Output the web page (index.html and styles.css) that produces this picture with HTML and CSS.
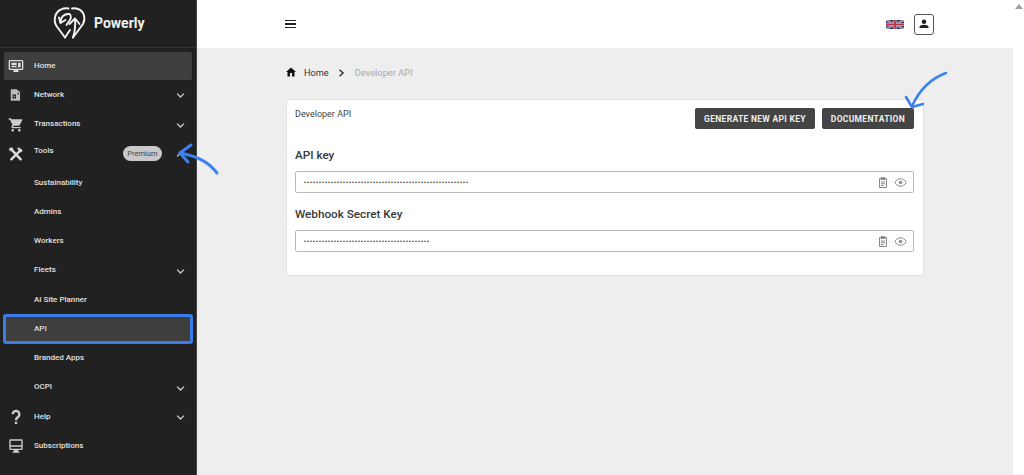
FILE: index.html
```html
<!DOCTYPE html>
<html lang="en">
<head>
<meta charset="utf-8">
<title>Developer API</title>
<link rel="stylesheet" href="styles.css">
</head>
<body>
<div class="app">
  <aside class="sidebar">
    <div class="brand">
      <svg class="logo" viewBox="0 0 44 38" fill="none" stroke="#f4f4f4" stroke-width="1.900" stroke-linecap="round" stroke-linejoin="round">
        <path d="M17 33.500 8.500 22C5 16 7 8 13 5.500 15.500 4.200 18 4 20.500 4.500"/>
        <path d="M25 33.500 35 20C38 14 36 7 30 5 28 4.200 26 4 24 4.500"/>
        <path d="M11 13.500 12.500 19 17.500 16"/>
        <path d="M12.500 18.500C12.500 13 16 9.500 21.500 10 24 12 23 15 20.500 18L18.500 21"/>
        <path d="M17 33.500 22 26"/>
        <path d="M21.500 20 27 14.500 31.500 20"/>
        <path d="M27 15C27.500 22 27 28 25 33.500"/>
      </svg>
      <span class="brand-name">Powerly</span>
    </div>
    <nav class="nav">
      <a class="item active">
        <svg class="ico" viewBox="0 0 24 24" fill="#ddd"><path d="M21 3H3a2 2 0 0 0-2 2v11a2 2 0 0 0 2 2h6l-1 2v1h8v-1l-1-2h6a2 2 0 0 0 2-2V5a2 2 0 0 0-2-2zm0 13H3V5h18z"/><path d="M5 7h8v4H5zm10 0h4v7h-4zM5 12h8v2H5z"/></svg>
        <span class="label">Home</span>
      </a>
      <a class="item">
        <svg class="ico ico-sm" viewBox="0 0 24 24" fill="#bbb"><path d="M3 2h10l6 5v15H3zm3 9v7h6v-7zm9-3v3h2V8z"/><path d="M9 12l-2 3h2v2l2-3H9z"/></svg>
        <span class="label">Network</span>
        <svg class="chev" viewBox="0 0 12 8"><path d="M1.500 1.500 6 6l4.500-4.500"/></svg>
      </a>
      <a class="item">
        <svg class="ico" viewBox="0 0 24 24" fill="#ccc"><path d="M7 18a2 2 0 1 0 0 4 2 2 0 0 0 0-4zm10 0a2 2 0 1 0 0 4 2 2 0 0 0 0-4zM1 2v2h2l3.600 7.600L5.200 14c-.7 1.400.3 3 1.800 3h12v-2H7.400l1.100-2h7.500c.7 0 1.400-.4 1.700-1L21.300 5c.4-.7-.1-1.500-.9-1.500H5.200L4.300 2z"/></svg>
        <span class="label">Transactions</span>
        <svg class="chev" viewBox="0 0 12 8"><path d="M1.500 1.500 6 6l4.500-4.500"/></svg>
      </a>
      <a class="item item-tools">
        <svg class="ico" viewBox="0 0 24 24" fill="none" stroke="#ddd" stroke-linecap="round"><path d="M5 20 19 6" stroke-width="3.600"/><path d="M5 5 19 20" stroke-width="3.600"/><path d="M14.500 4.500 19.500 9.500 21.500 7.500 16.500 2.500z" fill="#ddd" stroke-width="1"/><path d="M3 3 7 3 7 7 3 7z" fill="#ddd" stroke-width="1"/></svg>
        <span class="label label-up">Tools</span>
        <span class="badge">Premium</span>
        <svg class="chev" viewBox="0 0 12 8"><path d="M1.500 6.500 6 2l4.500 4.500"/></svg>
      </a>
      <a class="item"><span class="ico-gap"></span><span class="label">Sustainability</span></a>
      <a class="item"><span class="ico-gap"></span><span class="label">Admins</span></a>
      <a class="item"><span class="ico-gap"></span><span class="label">Workers</span></a>
      <a class="item"><span class="ico-gap"></span><span class="label">Fleets</span>
        <svg class="chev" viewBox="0 0 12 8"><path d="M1.500 1.500 6 6l4.500-4.500"/></svg></a>
      <a class="item"><span class="ico-gap"></span><span class="label">AI Site Planner</span></a>
      <a class="item current"><span class="ico-gap"></span><span class="label">API</span></a>
      <a class="item"><span class="ico-gap"></span><span class="label">Branded Apps</span></a>
      <a class="item"><span class="ico-gap"></span><span class="label">OCPI</span>
        <svg class="chev" viewBox="0 0 12 8"><path d="M1.500 1.500 6 6l4.500-4.500"/></svg></a>
      <a class="item">
        <svg class="ico" viewBox="0 0 24 24" fill="none" stroke="#ccc" stroke-width="3.600"><path d="M7 8a5 5 0 1 1 8.500 3.500C13.500 13 12 14 12 17"/><path d="M12 19v3.500"/></svg>
        <span class="label">Help</span>
        <svg class="chev" viewBox="0 0 12 8"><path d="M1.500 1.500 6 6l4.500-4.500"/></svg>
      </a>
      <a class="item">
        <svg class="ico" viewBox="0 0 24 24" fill="#ccc"><path d="M4 2h16a2 2 0 0 1 2 2v12a2 2 0 0 1-2 2h-5v2h2v2H7v-2h2v-2H4a2 2 0 0 1-2-2V4a2 2 0 0 1 2-2zm0 2v7h16V4zm0 9v3h16v-3z"/></svg>
        <span class="label">Subscriptions</span>
      </a>
    </nav>
  </aside>

  <div class="main">
    <header class="topbar">
      <div class="burger"><i></i><i></i><i></i></div>
      <div class="top-right">
        <svg class="flag" viewBox="0 0 60 30"><rect width="60" height="30" fill="#2a3a6e"/><path d="M0 0l60 30M60 0L0 30" stroke="#ddd" stroke-width="6"/><path d="M0 0l60 30M60 0L0 30" stroke="#b8324a" stroke-width="2.500"/><path d="M30 0v30M0 15h60" stroke="#ddd" stroke-width="10"/><path d="M30 0v30M0 15h60" stroke="#b8324a" stroke-width="6"/></svg>
        <button class="user-btn">
          <svg viewBox="0 0 24 24" fill="#222"><circle cx="12" cy="7.500" r="4.500"/><path d="M3 20v-1.500C3 15 8 13.500 12 13.500s9 1.500 9 5V20z"/></svg>
        </button>
      </div>
    </header>
    <main class="content">
      <div class="crumbs">
        <svg class="home-ico" viewBox="0 0 24 24" fill="#111"><path d="M10 21v-7h4v7h5v-9h3L12 3 2 12h3v9z"/></svg>
        <span class="crumb">Home</span>
        <svg class="crumb-sep" viewBox="0 0 8 10"><path d="M1.500 1 6 5 1.500 9"/></svg>
        <span class="crumb-now">Developer API</span>
      </div>
      <section class="card">
        <div class="card-head">
          <span class="card-title">Developer API</span>
          <div class="actions">
            <button class="btn">GENERATE NEW API KEY</button>
            <button class="btn">DOCUMENTATION</button>
          </div>
        </div>
        <h2 class="field-title first">API key</h2>
        <div class="field">
          <span class="dots">•••••••••••••••••••••••••••••••••••••••••••••••••••••••</span>
          <svg class="f-ico" viewBox="0 0 24 24" fill="none" stroke="#888" stroke-width="2"><path d="M8 4H5v18h14V4h-3"/><path d="M8 2.500h8V6H8z" fill="#888"/><path d="M8 11h8M8 14.500h8M8 18h5"/></svg>
          <svg class="f-ico eye" viewBox="0 0 24 24" fill="none" stroke="#888" stroke-width="1.800"><path d="M1.500 12C4 7.500 8 5 12 5s8 2.500 10.500 7C20 16.500 16 19 12 19S4 16.500 1.500 12z"/><circle cx="12" cy="12" r="2.500" fill="#888"/></svg>
        </div>
        <h2 class="field-title">Webhook Secret Key</h2>
        <div class="field">
          <span class="dots">••••••••••••••••••••••••••••••••••••••••••</span>
          <svg class="f-ico" viewBox="0 0 24 24" fill="none" stroke="#888" stroke-width="2"><path d="M8 4H5v18h14V4h-3"/><path d="M8 2.500h8V6H8z" fill="#888"/><path d="M8 11h8M8 14.500h8M8 18h5"/></svg>
          <svg class="f-ico eye" viewBox="0 0 24 24" fill="none" stroke="#888" stroke-width="1.800"><path d="M1.500 12C4 7.500 8 5 12 5s8 2.500 10.500 7C20 16.500 16 19 12 19S4 16.500 1.500 12z"/><circle cx="12" cy="12" r="2.500" fill="#888"/></svg>
        </div>
      </section>
    </main>
  </div>

  <div class="scrollbar">
    <svg class="scroll-up" viewBox="0 0 8 5"><path d="M4 0 8 5H0z"/></svg>
  </div>

  <svg class="arrow arrow-tools" viewBox="0 0 55 40" fill="none" stroke="#3b82f0" stroke-width="3" stroke-linecap="round" stroke-linejoin="round"><path d="M47 33C40 24 31 17 10 13"/><path d="M21 5 10 13l8 9"/></svg>
  <svg class="arrow arrow-docs" viewBox="0 0 50 40" fill="none" stroke="#3b82f0" stroke-width="2.600" stroke-linecap="round" stroke-linejoin="round"><path d="M44 2C30 7 18 18 10 35"/><path d="M4 26l6 10 11-3"/></svg>
</div>
</body>
</html>
```
FILE: styles.css
```css
* { box-sizing: border-box; }
html, body { margin: 0; height: 100%; overflow: hidden; }
body { font-family: Roboto, "Liberation Sans", sans-serif; background: #fff; }
.app { position: relative; display: flex; width: 1024px; height: 475px; overflow: hidden; }

.sidebar { width: 197px; flex: none; background: #212121; border-right: 1px solid #444; display: flex; flex-direction: column; }
.brand { height: 48px; flex: none; display: flex; align-items: center; gap: 2px; padding: 0 0 1px 48px; border-bottom: 1px solid #333; }
.logo { width: 44px; height: 38px; flex: none; }
.brand-name { color: #f2f2f2; font-size: 14px; font-weight: 700; }
.nav { padding: 4px 4px 0; display: flex; flex-direction: column; gap: 1.250px; }
.item { position: relative; display: flex; align-items: center; height: 28px; padding-left: 4px; padding-right: 7px; border-radius: 2px; color: #e0e0e0; font-size: 8px; font-weight: 500; }
.item.active { background: #3e3e3e; }
.item.current { background: #3e3e3e; outline: 3px solid #3b7de8; outline-offset: -2px; }
.ico { width: 16px; height: 16px; flex: none; }
.ico-sm { width: 14px; height: 14px; margin: 0 1px; }
.ico-gap { width: 16px; flex: none; }
.label { margin-left: 10px; padding-bottom: 2px; white-space: nowrap; }
.label-up { position: relative; top: -2px; }
.chev { position: absolute; right: 7px; top: 11px; width: 9px; height: 7px; fill: none; stroke: #ccc; stroke-width: 1.800; }
.badge { position: absolute; left: 119px; top: 6px; width: 39px; height: 15px; border-radius: 8px; background: #c9c9c9; color: #444; font-size: 7.500px; font-weight: 400; line-height: 15px; text-align: center; }

.main { flex: 1; min-width: 0; display: flex; flex-direction: column; }
.topbar { height: 48px; flex: none; background: #fff; display: flex; align-items: center; justify-content: space-between; padding: 0 79px 0 88px; }
.burger { display: flex; flex-direction: column; gap: 2px; width: 11px; }
.burger i { display: block; height: 1.300px; background: #222; }
.top-right { display: flex; align-items: center; gap: 10px; }
.flag { width: 18px; height: 9px; border-radius: 2px; }
.user-btn { width: 20px; height: 21px; padding: 0; border: 1px solid #555; border-radius: 3px; background: #fff; display: flex; align-items: center; justify-content: center; }
.user-btn svg { width: 12px; height: 12px; }

.content { flex: 1; background: #eee; padding: 17px 89px 0 89px; }
.crumbs { display: flex; align-items: center; height: 14px; margin-bottom: 20px; }
.home-ico { width: 12px; height: 12px; margin: 0 7px 0 -1px; }
.crumb { color: #333; font-size: 9.200px; }
.crumb-sep { width: 7px; height: 8px; margin: 2px 10px 0 9px; fill: none; stroke: #222; stroke-width: 1.600; }
.crumb-now { color: #aaa; font-size: 9.300px; }

.card { height: 177px; background: #fff; border: 1px solid #e2e2e2; border-radius: 3px; padding: 7px 9px 0 8px; }
.card-head { display: flex; justify-content: space-between; height: 32px; }
.card-title { font-size: 9px; color: #444; padding-top: 2px; }
.actions { display: flex; gap: 7px; margin-top: 1px; }
.btn { height: 21px; padding: 0 9px; border: none; border-radius: 2px; background: #444; color: #eee; font-family: Roboto, sans-serif; font-size: 8.500px; font-weight: 700; letter-spacing: .3px; }
.field-title { margin: 14px 0 9px; font-size: 11.700px; font-weight: 500; color: #3a3a3a; line-height: 14px; }
.field-title.first { margin-top: 9px; }
.field { display: flex; align-items: center; height: 22px; border: 1px solid #bbb; border-radius: 2px; padding: 0 6px 0 8px; gap: 5px; }
.dots { flex: 1; font-family: "Liberation Sans", sans-serif; font-size: 5.500px; letter-spacing: 1.075px; color: #333; white-space: nowrap; }
.f-ico { width: 12px; height: 13px; flex: none; }
.f-ico.eye { width: 13px; height: 13px; }

.scrollbar { width: 11px; flex: none; background: #fff; position: relative; }
.scroll-up { position: absolute; left: 2px; top: 4px; width: 8px; height: 5px; fill: #a0a0a0; }

.arrow { position: absolute; pointer-events: none; }
.arrow-tools { left: 170px; top: 140px; width: 55px; height: 40px; }
.arrow-docs { left: 902px; top: 71px; width: 50px; height: 40px; }
```
